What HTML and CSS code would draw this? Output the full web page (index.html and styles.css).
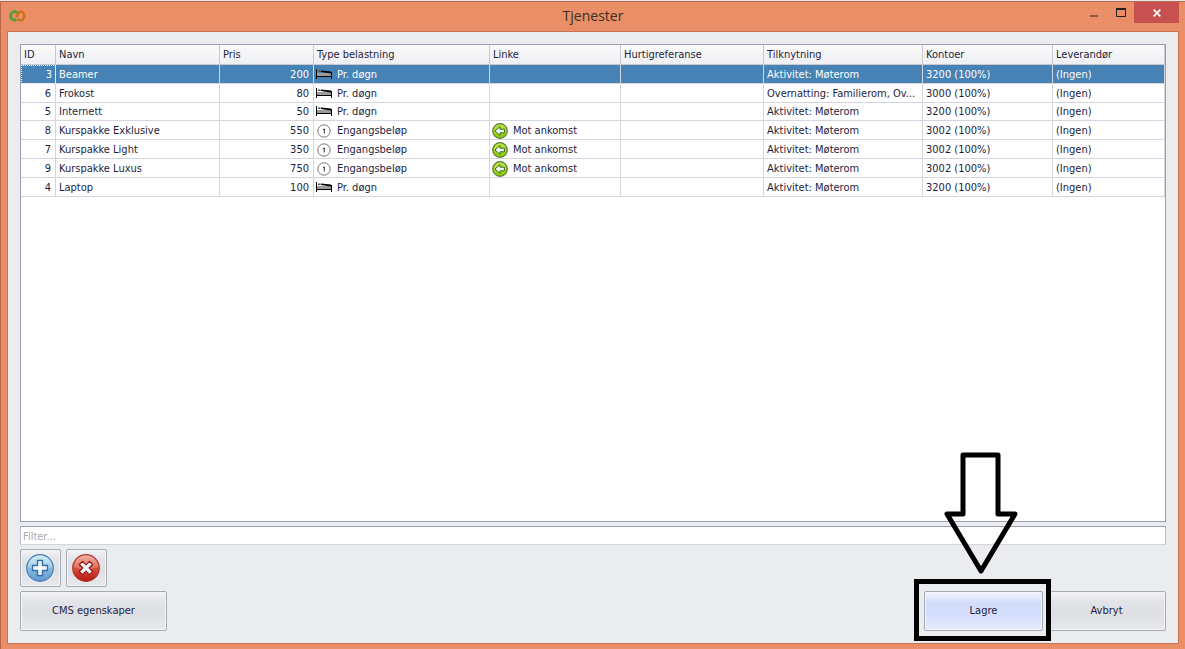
FILE: index.html
```html
<!DOCTYPE html>
<html lang="no">
<head>
<meta charset="utf-8">
<title>Tjenester</title>
<link rel="stylesheet" href="styles.css">
</head>
<body>
<svg class="defs" aria-hidden="true">
  <defs>
    <linearGradient id="green" x1="0" y1="0" x2="0" y2="1"><stop offset="0" stop-color="#c4e84a"/><stop offset="1" stop-color="#86c800"/></linearGradient>
    <linearGradient id="blue" x1="0" y1="0" x2="0" y2="1"><stop offset="0" stop-color="#c8edf8"/><stop offset=".5" stop-color="#86bde2"/><stop offset="1" stop-color="#5b98d2"/></linearGradient>
    <linearGradient id="red" x1="0" y1="0" x2="0" y2="1"><stop offset="0" stop-color="#f2a898"/><stop offset=".5" stop-color="#d9503f"/><stop offset="1" stop-color="#b5160f"/></linearGradient>
    <symbol id="bed" viewBox="0 0 16 10"><path d="M1 4h14v3H1z" fill="#9b9b9b"/><path d="M0 0h1v10H0z M1 7h14v1H1z M15 3h1v7h-1z M5 1.500 15 2.500V4.500L5 3z" fill="#000"/><path d="M2 1.500h2.500v1.500H2z" fill="#555"/></symbol>
    <symbol id="once" viewBox="0 0 14 14"><circle cx="7" cy="7" r="6.200" fill="#fff" stroke="#666" stroke-width=".9"/><path d="M5.800 6 7.300 4.800V9.500" fill="none" stroke="#333" stroke-width="1"/></symbol>
    <symbol id="back" viewBox="0 0 16 16"><circle cx="8" cy="8" r="7.300" fill="url(#green)" stroke="#5a7a40" stroke-width="1.200"/><path d="M3 8 8 3.600V6.200h4.400v3.600H8v2.600z" fill="#f2f6ff" stroke="#2d6412" stroke-width=".9" stroke-linejoin="round"/></symbol>
  </defs>
</svg>
<div class="window">
  <header class="titlebar">
    <svg class="logo" viewBox="0 0 17 12" aria-hidden="true">
      <path d="M7.500 9.500C4.200 10.900 1.600 8.800 1.600 6 1.600 3.200 3.900 1.600 6 1.600 7.300 1.600 8 2.200 8.200 3.200" fill="none" stroke="#4e9e3c" stroke-width="2.600"/>
      <path d="M8.800 8.800C9.300 9.900 10 10.400 11 10.400 13.400 10.400 15.300 8.400 15.300 5.800 15.300 3.200 13.300 1.600 11.400 1.600 8.800 1.600 9.300 4.600 7.200 7" fill="none" stroke="#cf7013" stroke-width="2.400"/>
    </svg>
    <h1 class="title">Tjenester</h1>
    <div class="controls">
      <button class="control" aria-label="Minimer"><svg width="9" height="9"><path d="M1 7h8v2H1z" fill="#8b5b48"/></svg></button>
      <button class="control" aria-label="Maksimer"><svg width="10" height="9"><path d="M.5 1V8.500H9.500V1" fill="none" stroke="#222"/><path d="M0 0h10v2H0z" fill="#222"/></svg></button>
      <button class="control close" aria-label="Lukk"><svg width="8" height="8"><path d="M.7.7 7.300 7.300M7.300.7.7 7.300" stroke="#fff" stroke-width="1.700"/></svg></button>
    </div>
  </header>
  <main class="content">
    <div class="grid">
      <table class="services">
        <colgroup><col class="c-id"><col class="c-name"><col class="c-price"><col class="c-type"><col class="c-link"><col class="c-ref"><col class="c-bind"><col class="c-acc"><col></colgroup>
        <thead><tr><th>ID</th><th>Navn</th><th>Pris</th><th>Type belastning</th><th>Linke</th><th>Hurtigreferanse</th><th>Tilknytning</th><th>Kontoer</th><th>Leverandør</th></tr></thead>
        <tbody>
          <tr class="selected"><td class="num focus">3</td><td>Beamer</td><td class="num">200</td><td><span class="item"><svg class="bed"><use href="#bed"/></svg>Pr. døgn</span></td><td></td><td></td><td>Aktivitet: Møterom</td><td>3200 (100%)</td><td>(Ingen)</td></tr>
          <tr><td class="num">6</td><td>Frokost</td><td class="num">80</td><td><span class="item"><svg class="bed"><use href="#bed"/></svg>Pr. døgn</span></td><td></td><td></td><td>Overnatting: Familierom, Ov...</td><td>3000 (100%)</td><td>(Ingen)</td></tr>
          <tr class="short"><td class="num">5</td><td>Internett</td><td class="num">50</td><td><span class="item"><svg class="bed"><use href="#bed"/></svg>Pr. døgn</span></td><td></td><td></td><td>Aktivitet: Møterom</td><td>3200 (100%)</td><td>(Ingen)</td></tr>
          <tr><td class="num">8</td><td>Kurspakke Exklusive</td><td class="num">550</td><td><span class="item"><svg class="once"><use href="#once"/></svg>Engangsbeløp</span></td><td><span class="item"><svg class="back"><use href="#back"/></svg>Mot ankomst</span></td><td></td><td>Aktivitet: Møterom</td><td>3002 (100%)</td><td>(Ingen)</td></tr>
          <tr><td class="num">7</td><td>Kurspakke Light</td><td class="num">350</td><td><span class="item"><svg class="once"><use href="#once"/></svg>Engangsbeløp</span></td><td><span class="item"><svg class="back"><use href="#back"/></svg>Mot ankomst</span></td><td></td><td>Aktivitet: Møterom</td><td>3002 (100%)</td><td>(Ingen)</td></tr>
          <tr><td class="num">9</td><td>Kurspakke Luxus</td><td class="num">750</td><td><span class="item"><svg class="once"><use href="#once"/></svg>Engangsbeløp</span></td><td><span class="item"><svg class="back"><use href="#back"/></svg>Mot ankomst</span></td><td></td><td>Aktivitet: Møterom</td><td>3002 (100%)</td><td>(Ingen)</td></tr>
          <tr><td class="num">4</td><td>Laptop</td><td class="num">100</td><td><span class="item"><svg class="bed"><use href="#bed"/></svg>Pr. døgn</span></td><td></td><td></td><td>Aktivitet: Møterom</td><td>3200 (100%)</td><td>(Ingen)</td></tr>
        </tbody>
      </table>
    </div>
    <input class="filter" type="text" placeholder="Filter..." aria-label="Filter">
    <div class="tools">
      <button class="btn tool" aria-label="Legg til"><svg width="28" height="28" viewBox="0 0 28 28"><circle cx="14" cy="14" r="13.300" fill="url(#blue)" stroke="#4f7fb5" stroke-width="1.200"/><path d="M2 13.500a12 12 0 0 1 24 0Q14 17 2 13.500z" fill="#fff" opacity=".22"/><path d="M11.500 6.500h5v5h5v5h-5v5h-5v-5h-5v-5h5z" fill="#f5f8fd" stroke="#3c6ea8" stroke-width="1.400" stroke-linejoin="round"/></svg></button>
      <button class="btn tool" aria-label="Slett"><svg width="28" height="28" viewBox="0 0 28 28"><circle cx="14" cy="14" r="13.300" fill="url(#red)" stroke="#b03a30" stroke-width="1.200"/><path d="M2 13.500a12 12 0 0 1 24 0Q14 17 2 13.500z" fill="#fff" opacity=".16"/><path d="M10.500 7.300 14 10.800l3.500-3.500 3.200 3.200L17.200 14l3.500 3.500-3.200 3.200-3.500-3.500-3.500 3.500-3.200-3.200L10.800 14l-3.500-3.500z" fill="#eef4fa" stroke="#8e1d18" stroke-width="1.200" stroke-linejoin="round"/></svg></button>
    </div>
    <footer class="actions">
      <button class="btn cms">CMS egenskaper</button>
      <div class="marked">
        <button class="btn save">Lagre</button>
        <span class="frame"></span>
        <svg class="arrow" viewBox="0 0 74 124" aria-hidden="true"><path d="M19 3H54V62H71L37 119 3 62H19z" fill="none" stroke="#000" stroke-width="5" stroke-linejoin="round"/></svg>
      </div>
      <button class="btn">Avbryt</button>
    </footer>
  </main>
</div>
</body>
</html>
```

FILE: styles.css
```css
* { box-sizing: border-box; }
body {
  margin: 0;
  padding-top: 1px;
  background: #e6e7ec;
  color: #1e1e3c;
  font: 11px/14px "DejaVu Sans Condensed", Tahoma, sans-serif;
}
button, input { font: inherit; color: inherit; margin: 0; }
.defs { position: absolute; width: 0; height: 0; }
.window {
  display: flex;
  flex-direction: column;
  min-height: calc(100vh - 1px);
  padding: 0 6px 5px 7px;
  background: #ea8e67;
  border-top: 1px solid #b9694a;
  box-shadow: inset 1px 0 #b9694a;
}
.titlebar {
  display: grid;
  grid-template-columns: 1fr auto 1fr;
  align-items: start;
  height: 29px;
}
.logo { width: 17px; height: 12px; margin: 8px 0 0 2px; }
.title {
  margin: 4px 0 0;
  color: #3b3026;
  font: 14px/20px "Open Sans", "Noto Sans", sans-serif;
}
.controls { display: flex; justify-content: flex-end; }
.control {
  display: flex;
  align-items: center;
  justify-content: center;
  width: 27px;
  height: 21px;
  padding: 0;
  border: 0;
  background: none;
}
.close { width: 45px; background: #c75050; }
.content {
  flex: 1;
  display: flex;
  flex-direction: column;
  padding: 12px;
  background: #ebecef;
  border: 1px solid #c57455;
}
.grid {
  flex: 1;
  background: #fff;
  border: 1px solid #9b9daf;
}
.services {
  width: 100%;
  table-layout: fixed;
  border-collapse: separate;
  border-spacing: 0;
}
.c-id { width: 35px; }
.c-name { width: 164px; }
.c-price { width: 94px; }
.c-type { width: 176px; }
.c-link { width: 131px; }
.c-ref { width: 143px; }
.c-bind { width: 159px; }
.c-acc { width: 130px; }
th, td {
  height: 19px;
  padding: 2px 3px 0;
  border-right: 1px solid #d5d6dd;
  border-bottom: 1px solid #d5d6dd;
  line-height: 16px;
  text-align: left;
  white-space: nowrap;
}
th {
  height: 20px;
  padding-top: 0;
  font-weight: normal;
  background: linear-gradient(#f9f9fa, #eff0f3);
  border-color: #c8c9d0;
}
.short td { height: 18px; padding-top: 1px; }
.num { padding-right: 4px; text-align: right; }
.focus { padding-right: 3px; }
.selected td { background: #4682b4; color: #fff; }
.selected .focus { outline: 1px dotted #fff; outline-offset: -1px; }
.item { display: flex; align-items: center; height: 16px; }
.bed { width: 16px; height: 10px; margin: 0 5px 2px -1px; }
.once { width: 14px; height: 14px; margin: 0 6px 1px 0; }
.back { width: 16px; height: 16px; margin: 0 5px 1px -1px; }
.filter {
  height: 19px;
  margin-top: 4px;
  padding: 1px 2px 0;
  background: #fff;
  border: 1px solid #b9bbc4;
  border-top-color: #9b9daf;
  border-bottom-color: #d5d6dd;
  outline: 0;
}
.filter::placeholder { color: #a9a9ae; opacity: 1; }
.tools { display: flex; gap: 5px; margin-top: 4px; }
.btn {
  width: 119px;
  height: 40px;
  padding: 0;
  border: 1px solid #a6a8b2;
  border-radius: 2px;
  background: linear-gradient(#f2f3f5, #e2e4e8 25%, #dddfe4 55%, #e8e9ec);
  box-shadow: inset 0 0 0 1px #f5f5f7;
}
.tool {
  display: flex;
  align-items: center;
  justify-content: center;
  width: 41px;
  height: 38px;
  padding-right: 1px;
}
.actions { display: flex; gap: 4px; margin-top: 4px; }
.cms { width: 147px; }
.marked { position: relative; margin-left: auto; }
.save {
  display: block;
  background: linear-gradient(#f0f4ff, #d2dcfb 30%, #d3ddfc 55%, #e6ecff);
}
.frame {
  position: absolute;
  inset: -12px -8px -10px -10px;
  border: 5px solid #000;
  pointer-events: none;
}
.arrow {
  position: absolute;
  left: 20px;
  bottom: 55px;
  width: 74px;
  height: 124px;
  pointer-events: none;
}
```
